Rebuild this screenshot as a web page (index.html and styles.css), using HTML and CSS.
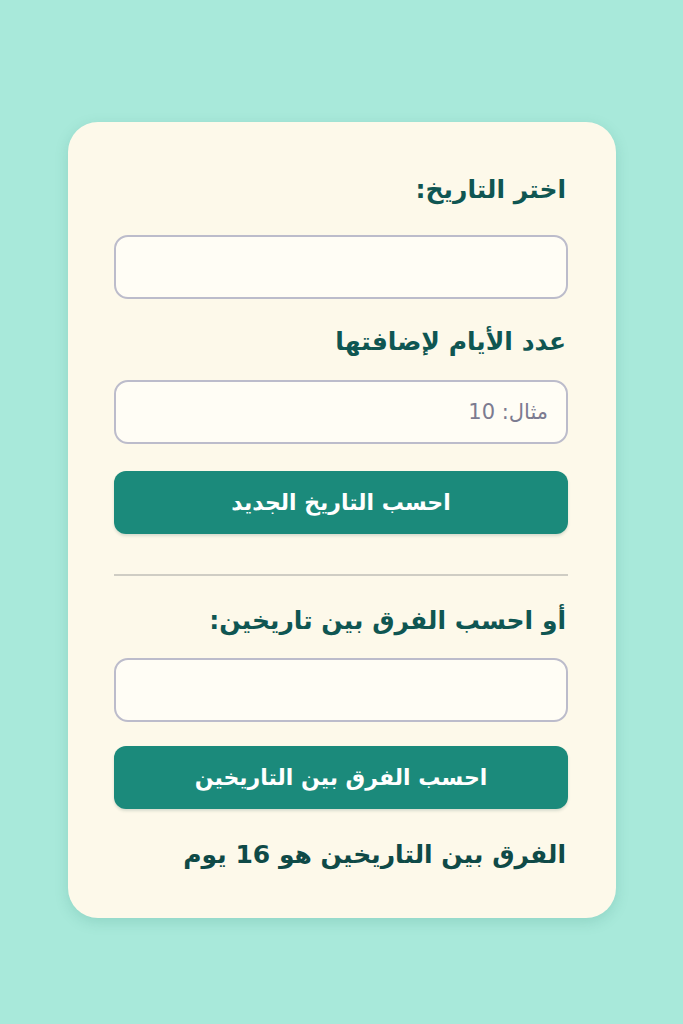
FILE: index.html
```html
<!DOCTYPE html>
<html lang="ar" dir="rtl">
<head>
<meta charset="utf-8">
<title>حاسبة التاريخ</title>
<link rel="stylesheet" href="styles.css">
</head>
<body>
<main class="page">
  <section class="card">
    <label class="label label-first">اختر التاريخ:</label>
    <div class="field"></div>
    <label class="label label-second">عدد الأيام لإضافتها</label>
    <div class="field field-placeholder"><span class="placeholder">مثال: 10</span></div>
    <button class="btn btn-first">احسب التاريخ الجديد</button>
    <hr class="divider">
    <label class="label label-third">أو احسب الفرق بين تاريخين:</label>
    <div class="field"></div>
    <button class="btn btn-second">احسب الفرق بين التاريخين</button>
    <p class="result">الفرق بين التاريخين هو 16 يوم</p>
  </section>
</main>
</body>
</html>
```

FILE: styles.css
```css
html, body {
  margin: 0;
  padding: 0;
}
body {
  background: #a8e9da;
  font-family: "DejaVu Sans", "Noto Sans", sans-serif;
  width: 683px;
  height: 1024px;
  overflow: hidden;
}
.page {
  padding-top: 122px;
  padding-right: 67px;
}
.card {
  width: 548px;
  height: 796px;
  box-sizing: border-box;
  background: #fdf9ea;
  border-radius: 30px;
  padding: 0 48px 0 46px;
  display: flex;
  flex-direction: column;
  box-shadow: 0 4px 14px rgba(40, 120, 105, 0.18);
}
.label {
  display: block;
  color: #0f5652;
  font-size: 25px;
  font-weight: bold;
  line-height: 32px;
  height: 32px;
  text-align: right;
  padding-right: 2px;
}
.label-first { margin-top: 52px; margin-bottom: 29px; }
.label-second { margin-top: 27px; margin-bottom: 22px; }
.label-third { margin-top: 29px; margin-bottom: 21px; }
.field {
  height: 64px;
  box-sizing: border-box;
  border: 2px solid #bcbccb;
  border-radius: 14px;
  background: #fffdf5;
  display: flex;
  align-items: center;
  padding: 0 18px;
}
.placeholder {
  color: #7c7b90;
  font-size: 21px;
}
.btn {
  height: 63px;
  border: none;
  border-radius: 12px;
  background: #1b8a7b;
  color: #ffffff;
  font-family: "DejaVu Sans", "Noto Sans", sans-serif;
  font-size: 22px;
  font-weight: bold;
  padding: 0;
  box-shadow: 0 2px 3px rgba(0, 60, 50, 0.15);
}
.btn-first { margin-top: 27px; }
.btn-second { margin-top: 24px; }
.divider {
  border: none;
  height: 2px;
  background: #cfcdc4;
  margin: 40px 0 0 0;
}
.result {
  margin: 30px 0 0 0;
  color: #0f4a47;
  font-size: 25px;
  font-weight: bold;
  line-height: 32px;
  text-align: right;
  padding-right: 2px;
}
```
